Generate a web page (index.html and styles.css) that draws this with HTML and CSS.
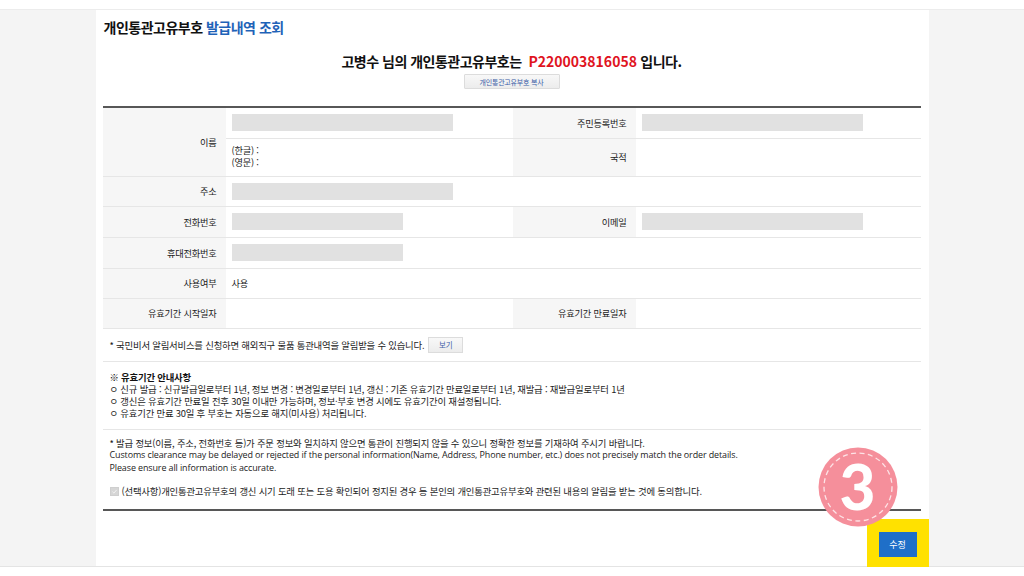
FILE: index.html
```html
<!DOCTYPE html>
<html lang="ko">
<head>
<meta charset="utf-8">
<title>개인통관고유부호 발급내역 조회</title>
<link rel="stylesheet" href="styles.css">
</head>
<body>
<div class="topbar"></div>
<div class="stage">
  <main class="panel">
    <h1 class="title">개인통관고유부호 <span class="blue">발급내역 조회</span></h1>
    <p class="headline">고병수 님의 개인통관고유부호는 &nbsp;<span class="red">P220003816058</span> 입니다.</p>
    <div class="copy-wrap"><button class="copy">개인통관고유부호 복사</button></div>

    <div class="board">
      <table class="info">
        <colgroup>
          <col class="c-label"><col class="c-value"><col class="c-label"><col class="c-value2">
        </colgroup>
        <tr class="r30">
          <th rowspan="2">이름</th>
          <td><span class="mask w221"></span></td>
          <th>주민등록번호</th>
          <td><span class="mask w221"></span></td>
        </tr>
        <tr class="r39">
          <td class="names">(한글) :<br>(영문) :</td>
          <th>국적</th>
          <td></td>
        </tr>
        <tr class="r30">
          <th>주소</th>
          <td colspan="3"><span class="mask w221"></span></td>
        </tr>
        <tr class="r31">
          <th>전화번호</th>
          <td><span class="mask w171"></span></td>
          <th>이메일</th>
          <td><span class="mask w221"></span></td>
        </tr>
        <tr class="r31">
          <th>휴대전화번호</th>
          <td colspan="3"><span class="mask w171"></span></td>
        </tr>
        <tr class="r30">
          <th>사용여부</th>
          <td colspan="3">사용</td>
        </tr>
        <tr class="r30">
          <th>유효기간 시작일자</th>
          <td></td>
          <th>유효기간 만료일자</th>
          <td></td>
        </tr>
      </table>

      <div class="note note-a">
        <span>* 국민비서 알림서비스를 신청하면 해외직구 물품 통관내역을 알림받을 수 있습니다.</span>
        <button class="view">보기</button>
      </div>

      <div class="note note-b">
        <p class="strong">※ 유효기간 안내사항</p>
        <p>ㅇ 신규 발급 : 신규발급일로부터 1년, 정보 변경 : 변경일로부터 1년, 갱신 : 기존 유효기간 만료일로부터 1년, 재발급 : 재발급일로부터 1년</p>
        <p>ㅇ 갱신은 유효기간 만료일 전후 30일 이내만 가능하며, 정보·부호 변경 시에도 유효기간이 재설정됩니다.</p>
        <p>ㅇ 유효기간 만료 30일 후 부호는 자동으로 해지(미사용) 처리됩니다.</p>
      </div>

      <div class="note note-c">
        <p>* 발급 정보(이름, 주소, 전화번호 등)가 주문 정보와 일치하지 않으면 통관이 진행되지 않을 수 있으니 정확한 정보를 기재하여 주시기 바랍니다.</p>
        <p class="en">Customs clearance may be delayed or rejected if the personal information(Name, Address, Phone number, etc.) does not precisely match the order details.</p>
        <p class="en">Please ensure all information is accurate.</p>
        <label class="agree">
          <span class="chk"><svg viewBox="0 0 10 10" width="9" height="9"><path d="M2 5.2 L4.2 7.3 L8 2.8" fill="none" stroke="#f2f2f2" stroke-width="1.4"/></svg></span>
          <span>(선택사항)개인통관고유부호의 갱신 시기 도래 또는 도용 확인되어 정지된 경우 등 본인의 개인통관고유부호와 관련된 내용의 알림을 받는 것에 동의합니다.</span>
        </label>
      </div>
    </div>

    <div class="actions">
      <div class="highlight"><button class="edit">수정</button></div>
    </div>

    <div class="badge">
      <svg viewBox="0 0 80 80" width="80" height="80">
        <circle cx="40" cy="40" r="39.5" fill="#f58f9b"/>
        <circle cx="40" cy="40" r="34" fill="none" stroke="#fde3e6" stroke-width="1.3" stroke-dasharray="5 3.5"/>
      </svg>
      <span class="num">3</span>
    </div>
  </main>
</div>
</body>
</html>
```

FILE: styles.css
```css
* { box-sizing: border-box; margin: 0; padding: 0; }

html, body { background: #fff; }

body {
  font-family: "Noto Sans CJK KR", "Noto Sans", sans-serif;
  color: #222;
}

.topbar {
  height: 10px;
  background: #fff;
  border-bottom: 1px solid #ececec;
}

.stage {
  height: 557px;
  background: #f4f4f4;
  border-bottom: 1px solid #e4e4e4;
}

.panel {
  position: relative;
  width: 833px;
  height: 100%;
  margin: 0 auto;
  background: #fff;
  padding: 7px 8px 0 7px;
  display: flex;
  flex-direction: column;
}

.title {
  margin-left: 1px;
  font-size: 14px;
  line-height: 20px;
  font-weight: 700;
  letter-spacing: -0.5px;
  color: #111;
}
.title .blue { color: #1f63b8; }

.headline {
  margin-top: 14px;
  text-align: center;
  font-size: 14px;
  line-height: 20px;
  font-weight: 700;
  letter-spacing: -0.5px;
  color: #111;
}
.headline .red { color: #e0141e; letter-spacing: 0; }

.copy-wrap {
  margin-top: 3px;
  display: flex;
  justify-content: center;
}
.copy {
  width: 96px;
  height: 15px;
  font-family: inherit;
  font-size: 7px;
  letter-spacing: -0.2px;
  color: #3c5ea8;
  background: linear-gradient(#f8f8f8, #ececec);
  border: 1px solid #dcdcdc;
  border-radius: 1px;
}

.board {
  margin-top: 17px;
  border-top: 2px solid #575757;
  border-bottom: 2px solid #575757;
  flex-shrink: 0;
}

.info {
  width: 818px;
  border-collapse: collapse;
  table-layout: fixed;
  font-size: 9.2px;
  letter-spacing: -0.2px;
}
.c-label { width: 123px; }
.c-value { width: 287px; }
.c-value2 { width: 285px; }

.info th, .info td {
  border-bottom: 1px solid #e6e6e6;
  vertical-align: middle;
}
.info th {
  background: #f6f6f6;
  font-weight: 400;
  text-align: right;
  padding-right: 9px;
  color: #222;
}
.info td {
  text-align: left;
  padding-left: 6px;
  color: #222;
}
.r30 { height: 30px; }
.r31 { height: 31px; }
.r39 { height: 38px; }

.info td.names { line-height: 12px; padding-bottom: 2px; }

.mask {
  display: block;
  height: 17px;
  background: #e1e1e1;
}
.w221 { width: 221px; }
.w171 { width: 171px; }

.note {
  font-size: 9.4px;
  letter-spacing: -0.2px;
  color: #222;
  padding-left: 7px;
  border-bottom: 1px solid #e6e6e6;
}
.note-a {
  height: 33px;
  display: flex;
  align-items: center;
  gap: 4px;
}
.view {
  width: 35px;
  height: 16px;
  font-family: inherit;
  font-size: 7.5px;
  color: #3c5ea8;
  background: linear-gradient(#f8f8f8, #ececec);
  border: 1px solid #dcdcdc;
}

.note-b {
  height: 68px;
  padding-top: 9px;
  line-height: 12px;
}
.note-b .strong { font-weight: 700; color: #111; }

.note-c {
  height: 79px;
  padding-top: 7px;
  line-height: 12.5px;
  border-bottom: 0;
}
.note-c .en {
  font-family: "Open Sans", "Noto Sans CJK KR", sans-serif;
  font-size: 8.95px;
  letter-spacing: -0.1px;
}
.agree {
  margin-top: 11px;
  display: flex;
  align-items: center;
  gap: 3px;
}
.chk {
  width: 9px;
  height: 9px;
  background: #d6d6d6;
  border: 1px solid #cfcfcf;
  display: flex;
  align-items: center;
  justify-content: center;
}
.chk svg { display: block; }

.actions {
  margin-top: 8px;
  margin-right: -8px;
  display: flex;
  justify-content: flex-end;
  flex: 1;
  align-items: flex-end;
}
.highlight {
  flex-shrink: 0;
  width: 62px;
  height: 49px;
  background: #ffe100;
  padding: 13px 0 0 12px;
}
.edit {
  display: block;
  width: 38px;
  height: 25px;
  background: #1f6fc8;
  color: #fff;
  border: 0;
  font-family: inherit;
  font-size: 9px;
}

.badge {
  position: absolute;
  left: 722px;
  top: 437px;
  width: 80px;
  height: 80px;
}
.badge svg { display: block; }
.badge .num {
  position: absolute;
  inset: 0;
  display: flex;
  align-items: center;
  justify-content: center;
  font-family: "Lato", "Noto Sans", sans-serif;
  font-weight: 900;
  font-size: 62px;
  color: #fff;
  padding-bottom: 3px;
}
```
